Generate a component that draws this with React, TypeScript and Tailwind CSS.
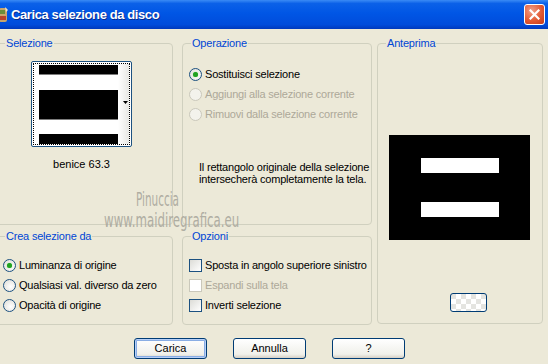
import React from "react";

const FONT = { fontFamily: '"Liberation Sans", Arial, sans-serif' };

function Group({ label, className, children }: { label: string; className?: string; children?: React.ReactNode }) {
  return (
    <div className={`relative rounded-[4px] border border-[#D0D0BF] ${className ?? ""}`}>
      <span className="absolute top-[-8px] left-[8px] bg-[#ECE9D8] px-[1px] text-[11px] leading-[14px] tracking-[-0.2px] text-[#0046D5] whitespace-nowrap">
        {label}
      </span>
      {children}
    </div>
  );
}

function Radio({ checked, disabled, label }: { checked?: boolean; disabled?: boolean; label: string }) {
  return (
    <div className="flex items-center h-[20px] whitespace-nowrap">
      <span
        className={`w-[13px] h-[13px] shrink-0 rounded-full border flex items-center justify-center ${
          disabled
            ? "border-[#CAC8BB] bg-[#F3F2EC]"
            : "border-[#1C5180] bg-[radial-gradient(circle_at_60%_60%,#ffffff,#DCDBD4)]"
        }`}
      >
        {checked && <span className="w-[5px] h-[5px] rounded-full bg-[#21A121] shadow-[0_0_1px_#4ED04E]" />}
      </span>
      <span className={`ml-[3px] text-[11px] tracking-[-0.2px] ${disabled ? "text-[#ACA899]" : "text-black"}`}>{label}</span>
    </div>
  );
}

function Check({ disabled, label }: { disabled?: boolean; label: string }) {
  return (
    <div className="flex items-center h-[20px] whitespace-nowrap">
      <span
        className={`w-[13px] h-[13px] shrink-0 border ${
          disabled
            ? "border-[#CAC8BB] bg-white"
            : "border-[#1C5180] bg-[linear-gradient(135deg,#DCDCD7,#ffffff)]"
        }`}
      />
      <span className={`ml-[3px] text-[11px] tracking-[-0.2px] ${disabled ? "text-[#ACA899]" : "text-black"}`}>{label}</span>
    </div>
  );
}

function Button({ label, main }: { label: string; main?: boolean }) {
  return (
    <div
      className={`w-[73px] h-[21px] rounded-[3px] border border-[#003C74] flex items-center justify-center text-[11px] text-black bg-[linear-gradient(#FFFFFF,#F0F0EA_80%,#D6D0C5)] ${
        main ? "shadow-[inset_0_0_0_1px_#B8D0F8,inset_0_0_0_2px_#89ADE4]" : ""
      }`}
    >
      {label}
    </div>
  );
}

export default function App() {
  return (
    <div className="w-[548px] h-[364px] overflow-hidden bg-[#ECE9D8] relative select-none" style={FONT}>
      {/* title bar */}
      <div className="h-[29px] flex items-center bg-[linear-gradient(#3A8BF5_0%,#0B61E8_12%,#0056E5_45%,#004CDB_85%,#0039BC_100%)]">
        <svg width="10" height="18" viewBox="0 0 10 18" className="ml-[-1px]">
          <rect x="0" y="2" width="8" height="14" rx="2" fill="#C9A56A" />
          <rect x="1" y="4" width="5" height="4" fill="#6B8E3A" />
          <rect x="1" y="10" width="6" height="4" fill="#B8432A" />
          <path d="M6 1 L9 4 L7 6 Z" fill="#F2E6C8" />
        </svg>
        <span className="ml-[2px] text-[13px] font-bold tracking-[-0.4px] text-white [text-shadow:1px_1px_0_#0A2C8C]">
          Carica selezione da disco
        </span>
        <div className="ml-auto mr-[3px] w-[21px] h-[21px] rounded-[3px] border border-white bg-[radial-gradient(circle_at_35%_30%,#F0A08A,#E35A33_55%,#C2391A)] flex items-center justify-center">
          <svg width="11" height="11" viewBox="0 0 11 11">
            <path d="M1.5 1.5 L9.5 9.5 M9.5 1.5 L1.5 9.5" stroke="white" strokeWidth="2.2" strokeLinecap="square" />
          </svg>
        </div>
      </div>

      {/* body */}
      <div className="flex mt-[14px] ml-[-4px]">
        <div className="flex flex-col w-[177px] gap-[11px]">
          <Group label="Selezione" className="h-[182px]">
            <div className="pl-[34px] pt-[17px] flex flex-col w-[136px]">
              <div className="w-[101px] h-[86px] rounded-[2px] border border-[#1C5180] bg-white p-[1px]">
                <div className="w-full h-full border border-dotted border-black flex">
                  <div className="flex flex-col pl-[5px] pt-[1px] w-[84px]">
                    <div className="h-[10px] bg-black border-b border-[#7C7C7C]" />
                    <div className="h-[15px]" />
                    <div className="h-[30px] bg-black border-b border-[#7C7C7C]" />
                    <div className="h-[14px]" />
                    <div className="h-[10px] bg-black" />
                  </div>
                  <div className="flex-1 bg-[linear-gradient(90deg,#FFFFFF,#E8E8E4)] flex items-center justify-center">
                    <svg width="5" height="3" viewBox="0 0 5 3" className="mt-[-4px] ml-[4px]">
                      <path d="M0 0 H5 L2.5 3 Z" fill="black" />
                    </svg>
                  </div>
                </div>
              </div>
              <div className="w-[101px] text-center text-[11px] mt-[9px]">benice 63.3</div>
            </div>
          </Group>
          <Group label="Crea selezione da" className="h-[89px]">
            <div className="pl-[6px] pt-[18px] flex flex-col">
              <Radio checked label="Luminanza di origine" />
              <Radio label="Qualsiasi val. diverso da zero" />
              <Radio label="Opacità di origine" />
            </div>
          </Group>
        </div>

        <div className="flex flex-col w-[190px] ml-[9px] gap-[11px]">
          <Group label="Operazione" className="h-[182px]">
            <div className="pl-[6px] pt-[20px] flex flex-col">
              <Radio checked label="Sostituisci selezione" />
              <Radio disabled label="Aggiungi alla selezione corrente" />
              <Radio disabled label="Rimuovi dalla selezione corrente" />
              <p className="mt-[37px] pl-[10px] text-[11px] leading-[12px] tracking-[-0.2px] text-black whitespace-nowrap">
                Il rettangolo originale della selezione
                <br />
                intersecherà completamente la tela.
              </p>
            </div>
          </Group>
          <Group label="Opzioni" className="h-[89px]">
            <div className="pl-[6px] pt-[18px] flex flex-col">
              <Check label="Sposta in angolo superiore sinistro" />
              <Check disabled label="Espandi sulla tela" />
              <Check label="Inverti selezione" />
            </div>
          </Group>
        </div>

        <Group label="Anteprima" className="w-[166px] h-[281px] ml-[5px]">
          <div className="pl-[11px] pt-[91px] flex flex-col">
            <div className="w-[141px] h-[105px] bg-black flex flex-col items-center pt-[23px] gap-[29px]">
              <div className="w-[78px] h-[15px] bg-white" />
              <div className="w-[78px] h-[15px] bg-white" />
            </div>
            <div className="ml-[61px] mt-[53px] w-[37px] h-[19px] rounded-[3px] border border-[#003C74] bg-[repeating-conic-gradient(#FFFFFF_0_25%,#E4E4E0_0_50%)] bg-[length:10px_10px]" />
          </div>
        </Group>
      </div>

      {/* buttons */}
      <div className="flex mt-[13px] pl-[134px] gap-[26px]">
        <Button label="Carica" main />
        <Button label="Annulla" />
        <Button label="?" />
      </div>

      {/* watermark */}
      <div className="absolute left-[136px] top-[190px] text-[#AFADA2] text-[19px] leading-[18px] scale-x-[0.55] origin-left" style={{ fontFamily: '"DejaVu Sans", sans-serif' }}>
        Pinuccia
      </div>
      <div className="absolute left-[104px] top-[211px] text-[#AFADA2] text-[19px] leading-[18px] scale-x-[0.62] origin-left" style={{ fontFamily: '"DejaVu Sans", sans-serif' }}>
        www.maidiregrafica.eu
      </div>
    </div>
  );
}
